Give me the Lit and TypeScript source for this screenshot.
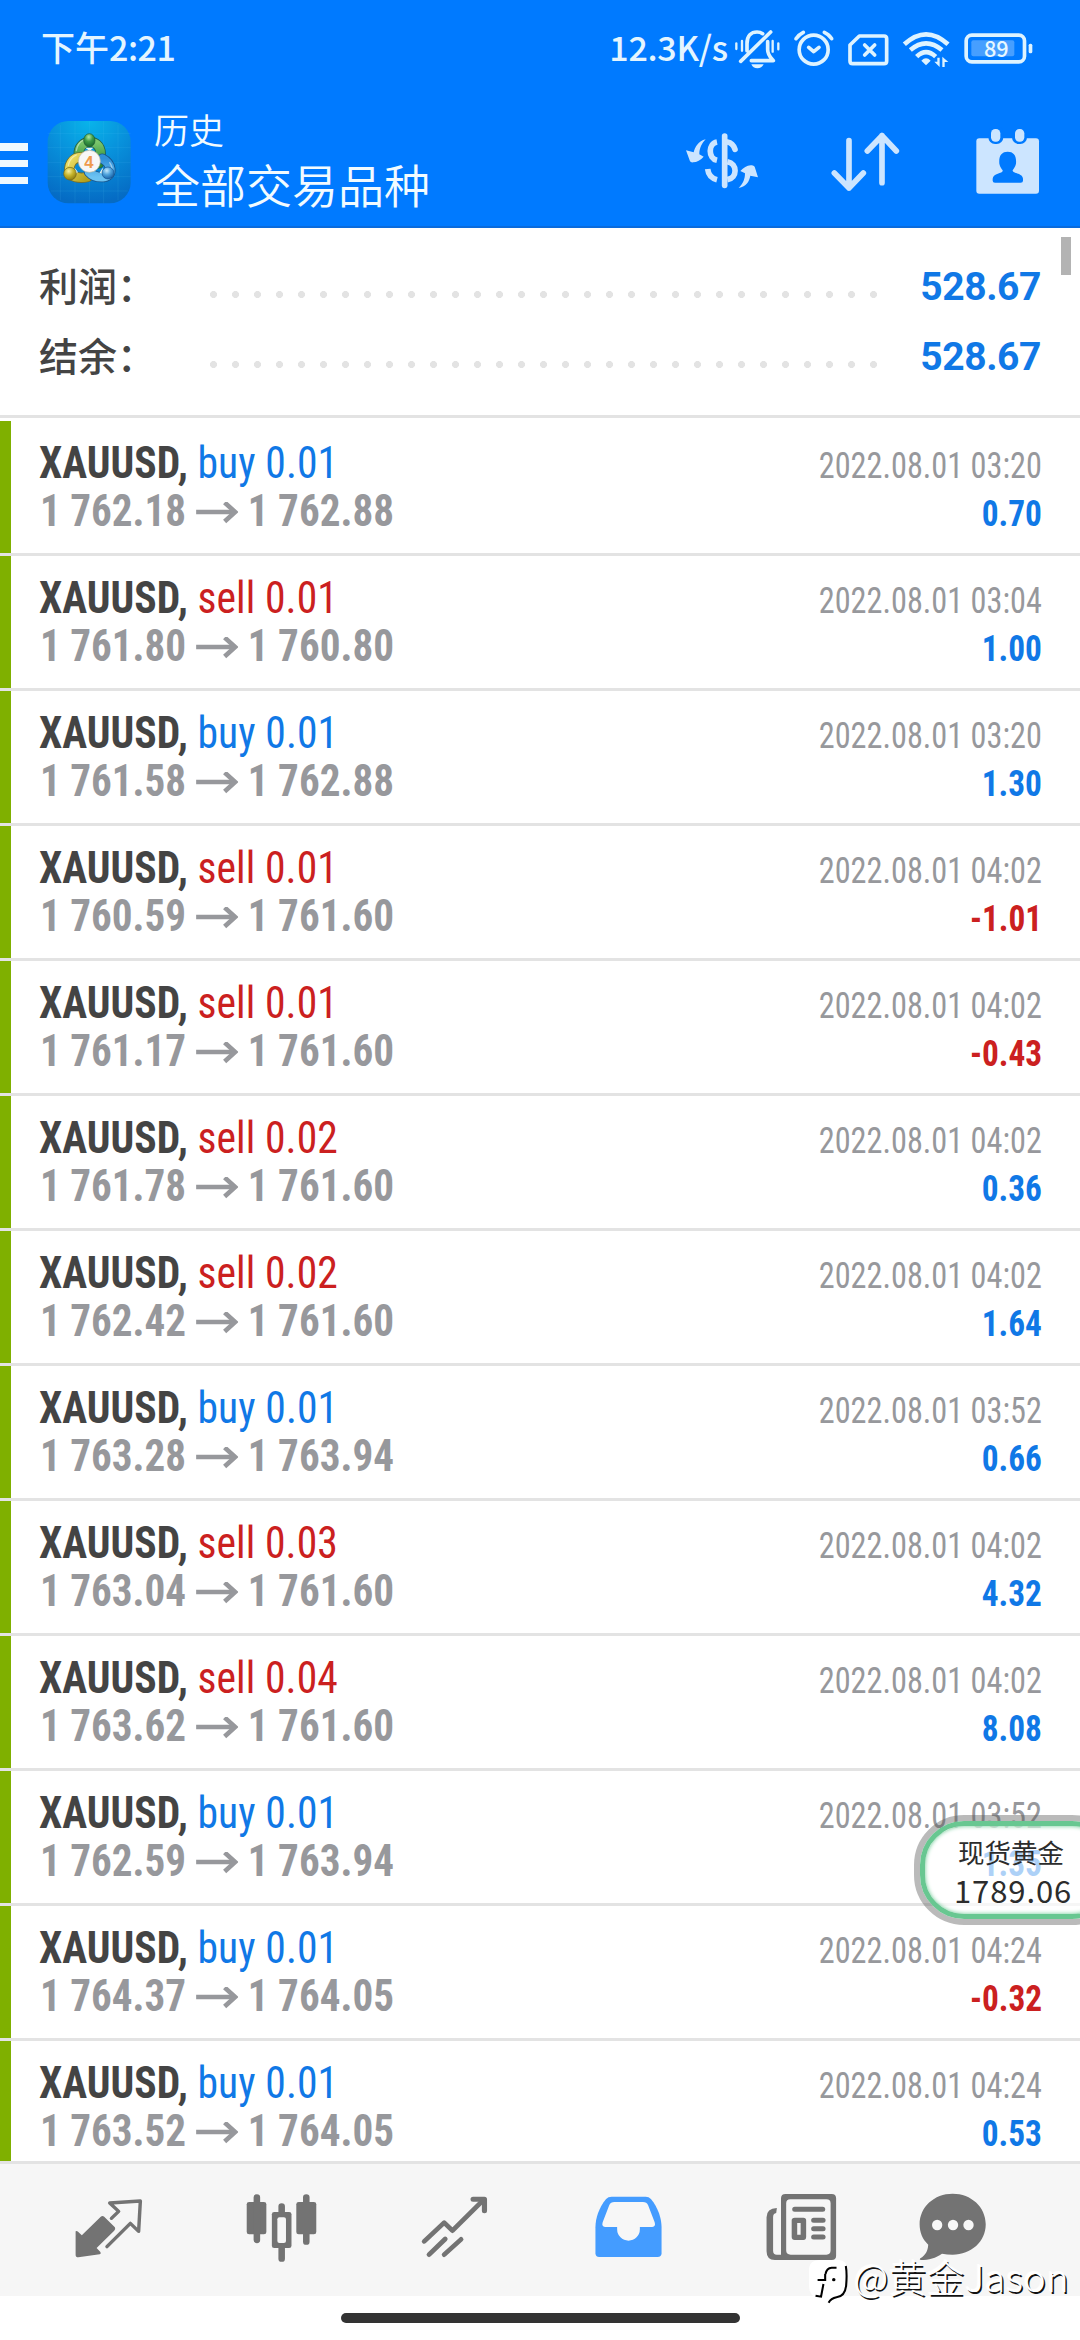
import { LitElement, html, css, svg } from "lit";
import { customElement, property } from "lit/decorators.js";

interface Deal {
  side: "buy" | "sell";
  volume: string;
  open: string;
  close: string;
  time: string;
  profit: string;
}

const d = (side: "buy" | "sell", volume: string, open: string, close: string, time: string, profit: string): Deal => ({
  side, volume, open: `1 ${open}`, close: `1 ${close}`, time: `2022.08.01 ${time}`, profit,
});

const DEALS: Deal[] = [
  d("buy", "0.01", "762.18", "762.88", "03:20", "0.70"),
  d("sell", "0.01", "761.80", "760.80", "03:04", "1.00"),
  d("buy", "0.01", "761.58", "762.88", "03:20", "1.30"),
  d("sell", "0.01", "760.59", "761.60", "04:02", "-1.01"),
  d("sell", "0.01", "761.17", "761.60", "04:02", "-0.43"),
  d("sell", "0.02", "761.78", "761.60", "04:02", "0.36"),
  d("sell", "0.02", "762.42", "761.60", "04:02", "1.64"),
  d("buy", "0.01", "763.28", "763.94", "03:52", "0.66"),
  d("sell", "0.03", "763.04", "761.60", "04:02", "4.32"),
  d("sell", "0.04", "763.62", "761.60", "04:02", "8.08"),
  d("buy", "0.01", "762.59", "763.94", "03:52", "1.35"),
  d("buy", "0.01", "764.37", "764.05", "04:24", "-0.32"),
  d("buy", "0.01", "763.52", "764.05", "04:24", "0.53"),
];

@customElement("app-header")
class AppHeader extends LitElement {
  static styles = css`
    :host { display: flex; flex-direction: column; height: 228px; box-sizing: border-box; background: #007aff; border-bottom: 2px solid #0a6bdc; color: #e4f5ff; font-family: "Noto Sans CJK SC", sans-serif; }
    .status { display: flex; height: 97px; padding: 0 43.33px 0 41px; }
    .clock { flex: 1; font-size: 34px; font-weight: 500; line-height: 50px; padding-top: 22px; white-space: pre; }
    .digits { letter-spacing: -0.5px; }
    .rate { font-size: 34px; font-weight: 500; line-height: 50px; padding-top: 22px; letter-spacing: -0.3px; margin-right: 4px; }
    .sicons { display: flex; padding-top: 26.67px; }
    .sicons svg { height: 43.33px; display: block; }
    .bar { display: flex; flex: 1; padding-right: 36.67px; }
    .menu { width: 46.5px; display: flex; flex-direction: column; gap: 9.2px; padding-top: 46.3px; }
    .line { width: 27.5px; height: 7.5px; background: #eef9ff; }
    .logo { width: 84px; height: 84px; margin-top: 23px; margin-right: 23.5px; display: block; }
    .titles { flex: 1; color: #f2fbff; }
    .t1 { font-size: 35px; line-height: 46px; padding-top: 9px; height: 46px; font-weight: 350; }
    .t2 { font-size: 46px; line-height: 60px; padding-top: 1px; font-weight: 350; }
    .acts { display: flex; padding-top: 29.67px; }
    .acts svg { height: 70px; display: block; }
    .a1 { width: 83.33px; margin-right: 63.33px; }
    .a2 { width: 76.67px; margin-right: 70px; }
    .a3 { width: 70px; }
    .w80 { width: 80px; } .w60 { width: 60px; } .w55 { width: 55px; } .w50 { width: 50px; }
    .s { fill: none; stroke: #def3ff; stroke-linecap: round; stroke-linejoin: round; stroke-width: 11; }
    .thin { stroke-width: 7; }
    .waves { fill: none; stroke: #def3ff; stroke-width: 14; }
    .f { fill: #def3ff; }
    .level { font: 500 65px "Noto Sans CJK SC", sans-serif; fill: #e8f8ff; text-anchor: middle; }
    .hs { fill: none; stroke: #cce5ff; stroke-width: 17; }
    .hr { stroke-linecap: round; stroke-linejoin: round; }
    .hf { fill: #cce5ff; }
    .cut { fill: #007aff; }
    .four { font: bold 50px "Liberation Sans", sans-serif; fill: #ef9a4d; text-anchor: middle; }
    .edge { fill: none; stroke-width: 31; stroke-linecap: round; }
    .body { fill: none; stroke-width: 26; stroke-linecap: round; }
    .shine { fill: none; stroke: #fff; stroke-opacity: 0.45; stroke-width: 4; stroke-linecap: round; }
  `;

  render() {
    const green = "M143 164C141 116 208 112 209 160Q209 180 204 190";
    const yellow = "M158 172C122 168 108 200 119 224Q140 238 170 231";
    const blue = "M214 176C242 190 248 226 220 231Q190 234 174 216";
    return html`
      <div class="status">
        <div class="clock">下午<span class="digits">2:21</span></div>
        <div class="rate">12.3K/s</div>
        <div class="sicons">
          <svg class="w60" viewBox="455 80 180 130">
            <path class="s" d="M481 183 571 95M500 151V130C500 106 513 95 530 95Q540 95 547 100M562 124V148C562 164 573 174 579 181H513"/>
            <path class="f" d="M513 192H550Q544 204 531 204T513 192Z"/>
            <path class="s thin" d="M468 129V146M485 122V151M577 122V154M594 129V147"/>
          </svg>
          <svg class="w50" viewBox="635 80 150 130">
            <circle class="s" cx="700" cy="148" r="43.5"/>
            <path class="s" d="M685 141 700 154 716 141M647 115Q655 103 669 96M732 96Q747 103 754 115"/>
          </svg>
          <svg class="w55" viewBox="785 80 165 130">
            <path class="s" d="M837 107H911Q919 107 919 115V182Q919 190 911 190H817Q809 190 809 182V134ZM853 134 883 164M883 134 853 164"/>
          </svg>
          <svg class="w60" viewBox="950 80 180 130">
            <path class="waves" d="M972 132Q1037 72 1103 132M990 149Q1037 109 1085 149M1009 169Q1037 142 1066 169"/>
            <path class="f" d="M1023 181Q1037 167 1051 181L1037 195Z"/>
            <path class="f" d="M1071 172H1078V200L1062 184H1071ZM1086 200H1093V185H1104L1086 169Z"/>
          </svg>
          <svg class="w80" viewBox="1130 80 240 130">
            <rect class="s" x="1157.500" y="104.500" width="175" height="80" rx="17"/>
            <rect x="1173" y="120" width="129" height="48" rx="6" fill="#fff" opacity=".28"/>
            <text class="level" x="1248" y="169">89</text>
            <rect class="f" x="1345" y="130" width="11" height="29" rx="5"/>
          </svg>
        </div>
      </div>
      <div class="bar">
        <div class="menu"><div class="line"></div><div class="line"></div><div class="line"></div></div>
        <svg class="logo" viewBox="48 60 252 252">
          <defs>
            <radialGradient id="bg" cx=".5" cy="0" r="1"><stop offset="0" stop-color="#08b4ea"/><stop offset=".45" stop-color="#0892dc"/><stop offset="1" stop-color="#056bc4"/></radialGradient>
            <linearGradient id="g" x2="0" y2="1"><stop stop-color="#7cc76c"/><stop offset="1" stop-color="#2a8a35"/></linearGradient>
            <linearGradient id="y" x2="1" y2="1"><stop stop-color="#efe168"/><stop offset="1" stop-color="#b3a01c"/></linearGradient>
            <linearGradient id="b" x2="0" y2="1"><stop stop-color="#2f8fd8"/><stop offset="1" stop-color="#6cc3f2"/></linearGradient>
            <radialGradient id="gs" cx=".45" cy=".25" r=".7"><stop stop-color="#b4e8a4"/><stop offset=".5" stop-color="#3f9c48"/><stop offset="1" stop-color="#1c6d31"/></radialGradient>
            <radialGradient id="ys" cx=".4" cy=".3" r=".7"><stop stop-color="#f6f0a0"/><stop offset=".5" stop-color="#c8b62e"/><stop offset="1" stop-color="#8f7e10"/></radialGradient>
            <radialGradient id="bs" cx=".4" cy=".3" r=".7"><stop stop-color="#c4e8fb"/><stop offset=".5" stop-color="#4ea2dc"/><stop offset="1" stop-color="#1b64a8"/></radialGradient>
          </defs>
          <rect x="50" y="63" width="249" height="247" rx="62" fill="url(#bg)"/>
          <path d="M88 75V300M132 64V310M175 64V310M218 64V310M261 75V300M50 100H299M50 143H299M50 187H299M50 230H299M60 273H290" stroke="#5fd0f5" stroke-opacity=".18" stroke-width="2" fill="none"/>
          <path class="edge" stroke="#235f45" d=${green}/><path class="body" stroke="url(#g)" d=${green}/>
          <path class="edge" stroke="#75702c" d=${yellow}/><path class="body" stroke="url(#y)" d=${yellow}/>
          <path class="edge" stroke="#17568f" d=${blue}/><path class="body" stroke="url(#b)" d=${blue}/>
          <path class="shine" d="M136 152Q140 128 158 120M112 196Q116 174 136 165M236 188Q244 200 243 208"/>
          <path d="M163 143H187L176 153ZM131 203 141 217 131 223ZM215 203 206 218 217 223Z" fill="#e9f7f3"/>
          <ellipse cx="175" cy="121" rx="17" ry="20" fill="url(#gs)" stroke="#1c5b34" stroke-width="2"/>
          <circle cx="117" cy="221" r="19" fill="url(#ys)" stroke="#74671a" stroke-width="2"/>
          <circle cx="231" cy="219" r="18" fill="url(#bs)" stroke="#15508f" stroke-width="2"/>
          <circle cx="175" cy="184" r="33" fill="#f7f7f7" stroke="#b9b59a" stroke-width="2"/>
          <text class="four" x="174" y="203">4</text>
        </svg>
        <div class="titles"><div class="t1">历史</div><div class="t2">全部交易品种</div></div>
        <div class="acts">
          <svg class="a1" viewBox="300 380 250 210">
            <path class="hs hr" d="M434 407V555"/>
            <path class="hs" d="M411 425C384 430 384 474 411 480M383 506C385 523 395 534 411 538M442 484C473 490 473 533 442 538"/>
            <path class="hs hr" d="M442 425Q459 428 465 447"/>
            <path class="hf" d="M377 417C355 422 345 440 341 456L318 450 330 483Q333 487 339 486 357 485 371 469L358 462C358 443 366 428 377 417ZM476 563C500 557 507 545 511 526L534 531 524 499Q520 493 512 495 495 497 481 512L495 519C495 535 490 550 476 563Z"/>
          </svg>
          <svg class="a2" viewBox="740 380 230 210">
            <path class="hs hr" d="M806 421V563M762 518 806 563 849 518M905 547V406M861 452 905 406 948 452"/>
          </svg>
          <svg class="a3" viewBox="1180 380 210 210">
            <rect class="hf" x="1190" y="414" width="188" height="166" rx="9"/>
            <rect class="cut" x="1226" y="378" width="45" height="53" rx="20"/><rect class="cut" x="1297" y="378" width="45" height="53" rx="20"/>
            <rect class="hf" x="1234" y="386" width="28" height="38" rx="13"/><rect class="hf" x="1306" y="386" width="28" height="38" rx="13"/>
            <path class="cut" d="M1284 454C1302 454 1311 466 1309 490 1307 500 1301 505 1299 510 1298 520 1329 517 1330 535V541Q1330 547 1323 547H1246Q1239 547 1239 541V535C1240 517 1271 520 1269 510 1266 505 1261 500 1259 490 1257 466 1266 454 1284 454Z"/>
          </svg>
        </div>
      </div>`;
  }
}

@customElement("deal-row")
class DealRow extends LitElement {
  @property({ attribute: false }) deal!: Deal;

  static styles = css`
    :host { display: block; height: 135px; box-sizing: border-box; border-bottom: 3px solid #e3e3e3; font-family: Roboto, sans-serif; font-stretch: 75%; background: #fff; }
    .row { height: 132px; box-sizing: border-box; padding: 18px 38px 0 28px; border-left: 11px solid #7fb000; }
    .ln { display: flex; justify-content: space-between; align-items: baseline; height: 48px; line-height: 48px; font-size: 44px; white-space: pre; }
    .deal { transform: scaleX(0.945); transform-origin: 0 50%; }
    .sym { font-weight: 700; color: #444; }
    .side { letter-spacing: 0.1px; }
    .buy { color: #1078e6; } .sell { color: #cb2020; }
    .px { font-weight: 700; color: #97989c; padding-left: 1px; transform: scaleX(0.935); transform-origin: 0 50%; }
    .arrow { width: 45px; height: 24px; margin: 0 10px 0 11px; }
    .time { font-size: 37px; color: #97989c; transform: scaleX(0.872); transform-origin: 100% 50%; }
    .profit { font-size: 37px; font-weight: 700; transform: scaleX(0.9); transform-origin: 100% 50%; }
  `;

  render() {
    const v = this.deal;
    return html`<div class="row">
      <div class="ln"><div class="deal"><span class="sym">XAUUSD, </span><span class="side ${v.side}">${v.side} ${v.volume}</span></div><div class="time">${v.time}</div></div>
      <div class="ln"><div class="px">${v.open}<svg class="arrow" viewBox="0 0 42 24" preserveAspectRatio="none"><path d="M0 10H38" fill="none" stroke="#97989c" stroke-width="4.300"/><path d="M28.500 0.500 39 10 28.500 19.500" fill="none" stroke="#97989c" stroke-width="4.600"/></svg>${v.close}</div><div class="profit ${v.profit.startsWith("-") ? "sell" : "buy"}">${v.profit}</div></div>
    </div>`;
  }
}

@customElement("tab-bar")
class TabBar extends LitElement {
  static styles = css`
    :host { display: grid; grid-template-columns: repeat(5, 173.3px) 129px; justify-items: center; box-sizing: border-box; height: 135px; padding: 26px 0 0 21.7px; border-top: 3px solid #e3e3e3; background: #f6f6f6; }
    svg { width: 75px; height: 75px; display: block; }
    .f { fill: #737373; }
    .s { fill: none; stroke: #737373; stroke-width: 15; stroke-linecap: round; stroke-linejoin: round; }
    .outline { stroke-width: 10; }
    .wick { stroke-width: 19; }
    .trend { stroke-width: 14; }
    .on { fill: #449cff; }
    .bg { fill: #f7f7f7; }
  `;

  icon(x: number, body: unknown) {
    return html`<svg viewBox="${x} 180 217.8 225" preserveAspectRatio="none">${body}</svg>`;
  }

  render() {
    return html`
      ${this.icon(205.6, svg`
        <path class="f" d="M219 304Q222 301 226 305L237 316 292 260Q297 256 302 260L333 292Q336 297 331 302L280 354 291 366Q294 371 289 373L227 382Q219 382 219 375Z"/>
        <path class="s outline" d="M323 265 344 244 318 219 407 213 402 304 378 280 310 350"/>`)}
      ${this.icon(707.1, svg`
        <rect class="f" x="715" y="216" width="57" height="97" rx="7"/><rect class="f" x="859" y="216" width="58" height="97" rx="7"/>
        <path class="s wick" d="M744.500 202V330M888 202V335M816.500 229V250M816.500 355V386"/>
        <rect class="f" x="788" y="246" width="57" height="108" rx="7"/>
        <rect class="bg" x="804" y="262" width="25" height="77" rx="6"/>`)}
      ${this.icon(1210.1, svg`
        <path class="s trend" d="M1231 334 1289 278 1313 302 1401 212M1245 374 1292 327M1289 374 1338 328"/>
        <path class="s" d="M1373 208H1406V242"/>`)}
      ${this.icon(145.1, svg`
        <path class="on" d="M205 200H304Q313 200 319 207C340 233 350 265 350 292V370Q350 381 338 381H169Q158 381 158 370V292C158 265 168 233 189 207Q195 200 205 200Z"/>
        <path class="bg" d="M213 216H296Q307 216 311 226L330 277Q334 290 323 291H287V298A33 34 0 0 1 221 298V291H186Q175 290 179 277L198 226Q202 216 213 216Z"/>`)}
      ${this.icon(648.6, svg`
        <path class="f" fill-rule="evenodd" d="M711 192H845Q858 192 858 205V377Q858 390 845 390H680Q656 390 656 364V262Q656 235 686 234L684 249Q675 250 675 262V362Q675 374 686 374H698V205Q698 192 711 192ZM725 208Q713 208 713 220V361Q713 374 726 374H830Q842 374 842 361V220Q842 208 830 208Z"/>
        <path class="s" d="M738 238H819M793 271H820M793 296H820M793 321H820"/>
        <path class="f" fill-rule="evenodd" d="M738 263H763Q771 263 771 271V321Q771 330 763 330H738Q729 330 729 321V271Q729 263 738 263ZM745 279V314H755V279Z"/>`)}
      ${this.icon(1089.6, svg`
        <path class="f" d="M1199 191C1253 191 1295 231 1295 283S1253 374 1199 374Q1183 374 1168 371C1150 384 1130 390 1106 390Q1101 389 1105 385C1120 375 1127 363 1128 344C1112 329 1103 308 1103 283C1103 231 1145 191 1199 191Z"/>
        <ellipse class="bg" cx="1154" cy="285" rx="15" ry="16"/><ellipse class="bg" cx="1200" cy="285" rx="15" ry="16"/><ellipse class="bg" cx="1245" cy="285" rx="15" ry="16"/>`)}`;
  }
}

@customElement("app-root")
class AppRoot extends LitElement {
  static styles = css`
    :host { display: flex; flex-direction: column; position: relative; width: 1080px; height: 2340px; overflow: hidden; background: #fff; font-family: Roboto, "Noto Sans CJK SC", sans-serif; }
    app-header { flex: none; }
    .summary { flex: none; height: 190px; box-sizing: border-box; padding: 24px 39px 0 39px; border-bottom: 3px solid #e3e3e3; }
    .sum { display: flex; height: 70px; align-items: center; }
    .label { width: 171px; font: 500 39px/64px "Noto Sans CJK SC", sans-serif; height: 70px; color: #444; }
    .dots { width: 682px; height: 7px; margin-top: 14px; background: radial-gradient(circle at 3.5px 3.5px, #e3e3e3 3.2px, transparent 3.8px) 0 0 / 22px 7px; }
    .total { flex: 1; text-align: right; font-size: 39px; line-height: 70px; font-weight: 700; letter-spacing: -0.4px; color: #1078e6; }
    .list { flex: none; height: 1743px; padding-top: 3px; box-sizing: border-box; overflow: hidden; }
    .scroll { position: absolute; left: 1061px; top: 237px; width: 10px; height: 38px; background: #b3b3b3; }
    tab-bar { flex: none; }
    .home { width: 399px; height: 10px; margin: 17px auto 0; border-radius: 5px; background: #333; }
    .float { position: absolute; left: 914px; top: 1815px; width: 208px; height: 110px; box-sizing: border-box; border: 6px solid rgba(90,90,90,.42); border-radius: 50px; }
    .pill { height: 98px; box-sizing: border-box; border: 5px solid #68c791; border-radius: 44px; background: rgba(255,255,255,.66); box-shadow: inset 0 0 4px #68c791; padding: 8px 0 0 29px; font-family: "Noto Sans CJK SC", sans-serif; color: #2c2c2c; }
    .name { font-size: 26.500px; line-height: 36px; padding-left: 4px; white-space: nowrap; }
    .quote { font-size: 31px; line-height: 40px; letter-spacing: 0.9px; }
    .mark { position: absolute; left: 809px; top: 2251px; display: flex; }
    .mark svg { width: 43px; height: 50px; flex: none; margin: 5px 2px 0 0; }
    .mark span { font: 300 37.500px/50px "Noto Sans CJK SC", sans-serif; letter-spacing: 0.6px; color: #fff; text-shadow: 1.5px 1.5px 0 #111, -1px -1px 1px #fff; white-space: nowrap; }
  `;

  render() {
    return html`
      <app-header></app-header>
      <div class="summary">
        ${["利润\uFF1A", "结余\uFF1A"].map((t) => html`<div class="sum"><div class="label">${t}</div><div class="dots"></div><div class="total">528.67</div></div>`)}
      </div>
      <div class="list">${DEALS.map((v) => html`<deal-row .deal=${v}></deal-row>`)}</div>
      <tab-bar></tab-bar>
      <div class="home"></div>
      <div class="scroll"></div>
      <div class="float"><div class="pill"><div class="name">现货黄金</div><div class="quote">1789.06</div></div></div>
      <div class="mark">
        <svg viewBox="782 378 125 150" preserveAspectRatio="none">
          <path d="M814 390H868Q893 390 893 420V462Q893 500 862 505Q845 508 838 520L836 505H814Q782 500 782 470V420Q782 390 814 390Z" fill="#fff"/>
          <path d="M889 408Q893 430 890 466Q887 499 862 502Q846 505 839 518" fill="none" stroke="#000" stroke-width="6"/>
          <path d="M862 413H848Q833 414 830 432M829 432V450H807M824 462L817 500L801 497" fill="none" stroke="#000" stroke-width="6"/>
          <circle cx="854" cy="449" r="5"/>
        </svg>
        <span>@黄金Jason</span>
      </div>`;
  }
}
